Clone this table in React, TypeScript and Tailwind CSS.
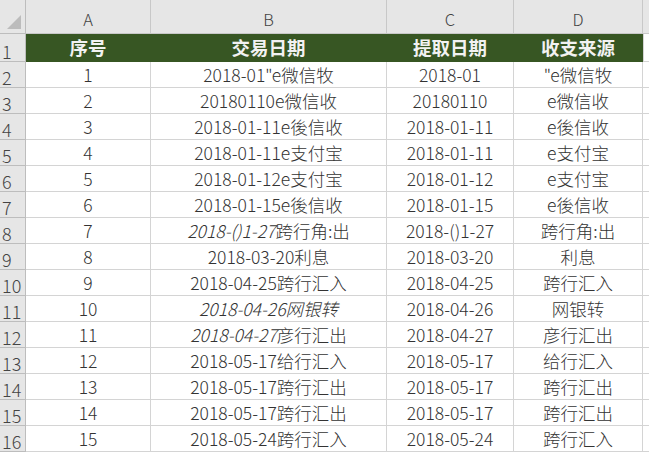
import React from 'react'

type Row = {
  no: string
  b: string
  bItalic?: string
  bAllItalic?: boolean
  c: string
  d: string
}

const ROWS: Row[] = [
  { no: '1', b: '2018-01"e微信牧', c: '2018-01', d: '"e微信牧' },
  { no: '2', b: '20180110e微信收', c: '20180110', d: 'e微信收' },
  { no: '3', b: '2018-01-11e後信收', c: '2018-01-11', d: 'e後信收' },
  { no: '4', b: '2018-01-11e支付宝', c: '2018-01-11', d: 'e支付宝' },
  { no: '5', b: '2018-01-12e支付宝', c: '2018-01-12', d: 'e支付宝' },
  { no: '6', b: '2018-01-15e後信收', c: '2018-01-15', d: 'e後信收' },
  { no: '7', bItalic: '2018-()1-27', b: '跨行角:出', c: '2018-()1-27', d: '跨行角:出' },
  { no: '8', b: '2018-03-20利息', c: '2018-03-20', d: '利息' },
  { no: '9', b: '2018-04-25跨行汇入', c: '2018-04-25', d: '跨行汇入' },
  { no: '10', b: '2018-04-26网银转', bAllItalic: true, c: '2018-04-26', d: '网银转' },
  { no: '11', bItalic: '2018-04-27', b: '彦行汇出', c: '2018-04-27', d: '彦行汇出' },
  { no: '12', b: '2018-05-17给行汇入', c: '2018-05-17', d: '给行汇入' },
  { no: '13', b: '2018-05-17跨行汇出', c: '2018-05-17', d: '跨行汇出' },
  { no: '14', b: '2018-05-17跨行汇出', c: '2018-05-17', d: '跨行汇出' },
  { no: '15', b: '2018-05-24跨行汇入', c: '2018-05-24', d: '跨行汇入' },
]

const GRID = 'grid grid-cols-[26px_125px_236px_127px_129px_1fr]'
const CELL = 'flex items-center justify-center pt-[1px] border-r border-b border-[#d4d4d4] whitespace-nowrap overflow-hidden font-light'
const ROWHEAD = 'flex items-end justify-start pl-[2px] bg-[#e6e6e6] border-r border-b border-[#bdbdbd] text-[18px] text-[#444] leading-[20px] font-light'

export default function App() {
  return (
    <div
      className="w-[649px] h-[455px] overflow-hidden bg-white text-[17.5px] text-[#333]"
      style={{ fontFamily: '"Noto Sans CJK SC", "Noto Sans", sans-serif' }}
    >
      {/* column letters */}
      <div className={`${GRID} h-[34px] bg-[#e6e6e6]`}>
        <div className="relative border-r border-b border-[#bdbdbd]">
          <div className="absolute right-[4px] bottom-[4px] w-0 h-0 border-l-[14px] border-l-transparent border-b-[14px] border-b-[#bcbcbc]" />
        </div>
        {['A', 'B', 'C', 'D'].map((l) => (
          <div key={l} className="flex items-end justify-center pb-[1px] border-r border-b border-[#c8c8c8] text-[16.5px] text-[#444] font-light">
            {l}
          </div>
        ))}
        <div className="border-b border-[#c8c8c8]" />
      </div>

      {/* header row */}
      <div className={`${GRID} h-[28px]`}>
        <div className={ROWHEAD}>1</div>
        {['序号', '交易日期', '提取日期', '收支来源'].map((h) => (
          <div key={h} className="flex items-center justify-center bg-[#375623] border-r border-[#375623] text-[#f2f2f2] font-bold text-[18.5px]">
            {h}
          </div>
        ))}
        <div className="border-l border-b border-[#d4d4d4]" />
      </div>

      {ROWS.map((r, i) => (
        <div key={r.no} className={`${GRID} h-[26px]`}>
          <div className={ROWHEAD}>{i + 2}</div>
          <div className={CELL}>{r.no}</div>
          <div className={CELL}>
            {r.bAllItalic ? (
              <span className="italic">{r.b}</span>
            ) : (
              <span>
                {r.bItalic && <span className="italic">{r.bItalic}</span>}
                {r.b}
              </span>
            )}
          </div>
          <div className={CELL}>{r.c}</div>
          <div className={CELL}>{r.d}</div>
          <div className="border-b border-[#d4d4d4]" />
        </div>
      ))}
    </div>
  )
}
